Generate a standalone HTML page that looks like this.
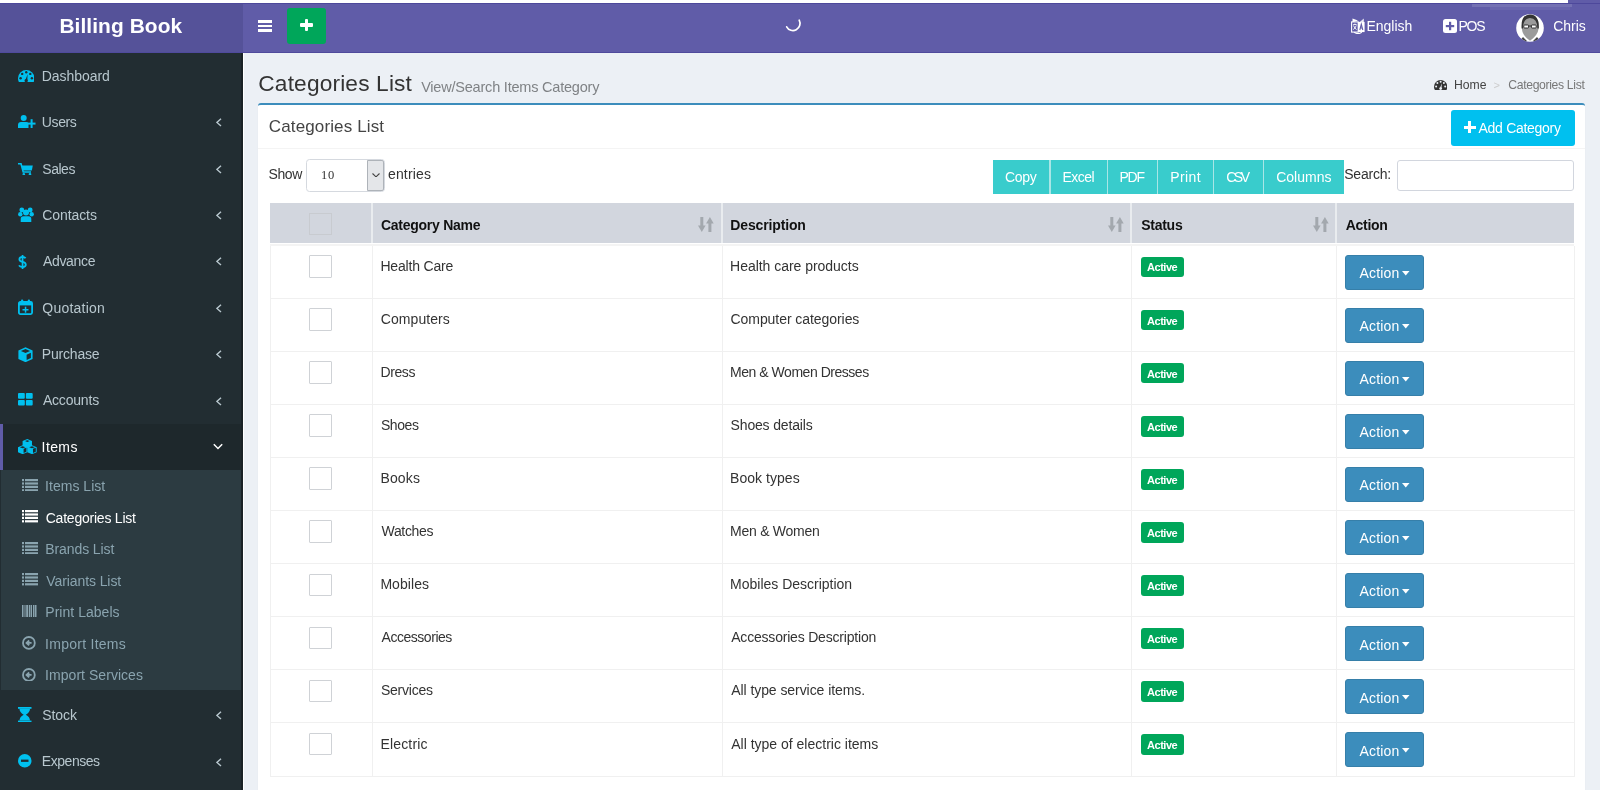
<!DOCTYPE html>
<html><head><meta charset="utf-8"><title>Categories List</title>
<style>
html,body{margin:0;padding:0;width:1600px;height:790px;overflow:hidden;background:#ecf0f5;}
body{position:relative;font-family:"Liberation Sans",sans-serif;}
#root{position:absolute;left:0;top:0;width:1600px;height:790px;will-change:transform;overflow:hidden;}
#root>div,#root>span,#root>svg{position:absolute;display:block;}
span{white-space:nowrap;}
</style></head><body><div id="root">
<div style="left:0px;top:0px;width:1600px;height:790px;background:#ecf0f5;"></div>
<div style="left:0px;top:0px;width:1568px;height:3px;background:#ffffff;"></div>
<div style="left:1568px;top:0px;width:32px;height:3px;background:#605ca8;"></div>
<div style="left:0px;top:3px;width:243px;height:50px;background:#555299;"></div>
<div style="left:243px;top:3px;width:1357px;height:50px;background:#605ca8;"></div>
<div style="left:0px;top:3px;width:1600px;height:1px;background:#4d489b;"></div>
<div style="left:0px;top:52px;width:1600px;height:1px;background:#4f4a9c;"></div>
<div style="left:1472px;top:4px;width:100px;height:3px;background:rgba(255,255,255,0.13);"></div>
<div style="left:1490px;top:7px;width:80px;height:3px;background:rgba(255,255,255,0.06);"></div>
<span style="left:59.40px;top:16.41px;font-size:20.9px;line-height:20.9px;color:#fff;font-weight:700;letter-spacing:0.082px;">Billing Book</span>
<div style="left:258px;top:20px;width:13.5px;height:2.5px;background:#fff;"></div>
<div style="left:258px;top:24.5px;width:13.5px;height:2.5px;background:#fff;"></div>
<div style="left:258px;top:29px;width:13.5px;height:2.5px;background:#fff;"></div>
<div style="left:286.5px;top:8.2px;width:39px;height:35.8px;background:#00a65a;border-radius:3px;"></div>
<div style="left:304.6px;top:18.8px;width:3.6px;height:12.5px;background:#fff;border-radius:1px;"></div>
<div style="left:300px;top:23.3px;width:12.6px;height:3.6px;background:#fff;border-radius:1px;"></div>
<svg style="left:784px;top:15px;" width="18" height="18" viewBox="0 0 18 18"><path d="M15.2 5.2 A6.6 6.6 0 1 1 2.7 11.8" fill="none" stroke="#fff" stroke-width="1.7" stroke-linecap="round"/></svg>
<svg style="left:1351px;top:17.6px;" width="14" height="16.2" viewBox="0 0 14 16.2"><path d="M1.5 0.6 L7 2.6 L1.5 4.2 Z" fill="#fff"/><path d="M12.8 0.5 L12.8 4.2 L8.5 4.2 Z" fill="#fff" opacity="0.85"/><rect x="0.6" y="3.9" width="6.6" height="10.2" fill="none" stroke="#fff" stroke-width="1.1"/><rect x="7" y="3.9" width="6.6" height="10.2" fill="#fff"/><path d="M2.2 6.5 L5.6 6.5 M3.9 5.6 L3.9 6.5 M2.5 7.5 Q3.9 11 5.6 11.5 M5.3 7.5 Q3.9 11 2.2 11.5" fill="none" stroke="#fff" stroke-width="0.9"/><path d="M8.8 12 L10.3 6.2 L11.8 12 M9.4 10 L11.2 10" fill="none" stroke="#605ca8" stroke-width="1.1"/><path d="M3.2 14.2 Q7 17 10.8 14.2" fill="none" stroke="#fff" stroke-width="1.1"/></svg>
<span style="left:1366.40px;top:19.35px;font-size:14px;line-height:14px;color:#fff;letter-spacing:0.017px;">English</span>
<svg style="left:1443px;top:18.5px;" width="14" height="14" viewBox="0 0 14 14"><rect x="0" y="0" width="14" height="14" rx="2.5" fill="#fff"/><rect x="6" y="2.8" width="2.2" height="8.4" fill="#605ca8"/><rect x="2.8" y="6" width="8.4" height="2.2" fill="#605ca8"/></svg>
<span style="left:1458.40px;top:19.35px;font-size:14px;line-height:14px;color:#fff;letter-spacing:-1.150px;">POS</span>
<svg style="left:1516px;top:13.5px;" width="28" height="28" viewBox="0 0 28 28"><defs><clipPath id="cav"><circle cx="14" cy="14" r="13.8"/></clipPath></defs><circle cx="14" cy="14" r="13.8" fill="#fff"/><g clip-path="url(#cav)"><path d="M3 28 L7 23 L11 27 L10 28 Z M25 28 L21 23 L17 27 L18 28 Z" fill="#444"/></g><path d="M6 10 Q6 2 14 2 Q22 2 22.5 10 L22.5 15 Q22 21 14 26.8 Q6 21 6 15 Z" fill="#9b9b9b"/><path d="M5.6 14.5 Q4.6 0.6 14 0.4 Q23.4 0.6 22.8 14.5 L21.4 14.5 Q21.5 4.5 14 4 Q7 4.5 7 14.5 Z" fill="#333"/><rect x="7.8" y="11" width="4.8" height="3" rx="0.8" fill="#fff" stroke="#222" stroke-width="0.9"/><rect x="15.4" y="11" width="4.8" height="3" rx="0.8" fill="#fff" stroke="#222" stroke-width="0.9"/><path d="M12.6 12 L15.4 12" stroke="#222" stroke-width="0.9"/></svg>
<span style="left:1553.30px;top:19.15px;font-size:14px;line-height:14px;color:#fff;letter-spacing:-0.050px;">Chris</span>
<div style="left:0px;top:53px;width:243px;height:737px;background:#222d32;"></div>
<div style="left:241px;top:53px;width:2px;height:737px;background:#1a2226;"></div>
<div style="left:243px;top:53px;width:1px;height:737px;background:#ffffff;"></div>
<div style="left:0px;top:423.7px;width:241px;height:46.2px;background:#1e282c;"></div>
<div style="left:0px;top:423.7px;width:3px;height:46.2px;background:#605ca8;"></div>
<div style="left:1px;top:469.9px;width:240px;height:220.5px;background:#2c3b41;"></div>
<span style="left:41.80px;top:68.95px;font-size:14px;line-height:14px;color:#b8c7ce;letter-spacing:-0.062px;">Dashboard</span>
<span style="left:41.80px;top:115.31px;font-size:14px;line-height:14px;color:#b8c7ce;letter-spacing:-0.375px;">Users</span>
<svg style="left:216px;top:118.36px;" width="6" height="9" viewBox="0 0 6 9"><path d="M5 0.7 L0.9 4.4 L5 8.1" fill="none" stroke="#b8c7ce" stroke-width="1.4"/></svg>
<span style="left:42.30px;top:161.67px;font-size:14px;line-height:14px;color:#b8c7ce;letter-spacing:-0.475px;">Sales</span>
<svg style="left:216px;top:164.71999999999997px;" width="6" height="9" viewBox="0 0 6 9"><path d="M5 0.7 L0.9 4.4 L5 8.1" fill="none" stroke="#b8c7ce" stroke-width="1.4"/></svg>
<span style="left:42.20px;top:208.03px;font-size:14px;line-height:14px;color:#b8c7ce;letter-spacing:-0.071px;">Contacts</span>
<svg style="left:216px;top:211.07999999999998px;" width="6" height="9" viewBox="0 0 6 9"><path d="M5 0.7 L0.9 4.4 L5 8.1" fill="none" stroke="#b8c7ce" stroke-width="1.4"/></svg>
<span style="left:42.90px;top:254.39px;font-size:14px;line-height:14px;color:#b8c7ce;letter-spacing:-0.317px;">Advance</span>
<svg style="left:216px;top:257.44px;" width="6" height="9" viewBox="0 0 6 9"><path d="M5 0.7 L0.9 4.4 L5 8.1" fill="none" stroke="#b8c7ce" stroke-width="1.4"/></svg>
<span style="left:42.30px;top:300.75px;font-size:14px;line-height:14px;color:#b8c7ce;letter-spacing:0.225px;">Quotation</span>
<svg style="left:216px;top:303.8px;" width="6" height="9" viewBox="0 0 6 9"><path d="M5 0.7 L0.9 4.4 L5 8.1" fill="none" stroke="#b8c7ce" stroke-width="1.4"/></svg>
<span style="left:41.80px;top:347.11px;font-size:14px;line-height:14px;color:#b8c7ce;letter-spacing:-0.186px;">Purchase</span>
<svg style="left:216px;top:350.15999999999997px;" width="6" height="9" viewBox="0 0 6 9"><path d="M5 0.7 L0.9 4.4 L5 8.1" fill="none" stroke="#b8c7ce" stroke-width="1.4"/></svg>
<span style="left:42.90px;top:393.47px;font-size:14px;line-height:14px;color:#b8c7ce;letter-spacing:-0.186px;">Accounts</span>
<svg style="left:216px;top:396.52px;" width="6" height="9" viewBox="0 0 6 9"><path d="M5 0.7 L0.9 4.4 L5 8.1" fill="none" stroke="#b8c7ce" stroke-width="1.4"/></svg>
<span style="left:41.60px;top:439.83px;font-size:14px;line-height:14px;color:#fff;letter-spacing:0.400px;">Items</span>
<svg style="left:213px;top:442.5px;" width="10" height="7" viewBox="0 0 10 7"><path d="M0.8 1.2 L5 5.5 L9.2 1.2" fill="none" stroke="#fff" stroke-width="1.5"/></svg>
<span style="left:42.30px;top:707.85px;font-size:14px;line-height:14px;color:#b8c7ce;letter-spacing:-0.100px;">Stock</span>
<span style="left:41.80px;top:754.45px;font-size:14px;line-height:14px;color:#b8c7ce;letter-spacing:-0.457px;">Expenses</span>
<svg style="left:216px;top:710.9000000000001px;" width="6" height="9" viewBox="0 0 6 9"><path d="M5 0.7 L0.9 4.4 L5 8.1" fill="none" stroke="#b8c7ce" stroke-width="1.4"/></svg>
<svg style="left:216px;top:757.5px;" width="6" height="9" viewBox="0 0 6 9"><path d="M5 0.7 L0.9 4.4 L5 8.1" fill="none" stroke="#b8c7ce" stroke-width="1.4"/></svg>
<span style="left:45.10px;top:479.05px;font-size:14px;line-height:14px;color:#8aa4af;letter-spacing:0.022px;">Items List</span>
<svg style="left:22px;top:478.59999999999997px;" width="16" height="12.5" viewBox="0 0 16 12.5"><rect x="0" y="0" width="2" height="2.2" fill="#8aa4af"/><rect x="3" y="0" width="13" height="2.2" fill="#8aa4af"/><rect x="0" y="3.4" width="2" height="2.2" fill="#8aa4af"/><rect x="3" y="3.4" width="13" height="2.2" fill="#8aa4af"/><rect x="0" y="6.8" width="2" height="2.2" fill="#8aa4af"/><rect x="3" y="6.8" width="13" height="2.2" fill="#8aa4af"/><rect x="0" y="10.2" width="2" height="2.2" fill="#8aa4af"/><rect x="3" y="10.2" width="13" height="2.2" fill="#8aa4af"/></svg>
<span style="left:45.70px;top:510.55px;font-size:14px;line-height:14px;color:#fff;letter-spacing:-0.221px;">Categories List</span>
<svg style="left:22px;top:510.09999999999997px;" width="16" height="12.5" viewBox="0 0 16 12.5"><rect x="0" y="0" width="2" height="2.2" fill="#fff"/><rect x="3" y="0" width="13" height="2.2" fill="#fff"/><rect x="0" y="3.4" width="2" height="2.2" fill="#fff"/><rect x="3" y="3.4" width="13" height="2.2" fill="#fff"/><rect x="0" y="6.8" width="2" height="2.2" fill="#fff"/><rect x="3" y="6.8" width="13" height="2.2" fill="#fff"/><rect x="0" y="10.2" width="2" height="2.2" fill="#fff"/><rect x="3" y="10.2" width="13" height="2.2" fill="#fff"/></svg>
<span style="left:45.30px;top:542.05px;font-size:14px;line-height:14px;color:#8aa4af;letter-spacing:-0.100px;">Brands List</span>
<svg style="left:22px;top:541.6px;" width="16" height="12.5" viewBox="0 0 16 12.5"><rect x="0" y="0" width="2" height="2.2" fill="#8aa4af"/><rect x="3" y="0" width="13" height="2.2" fill="#8aa4af"/><rect x="0" y="3.4" width="2" height="2.2" fill="#8aa4af"/><rect x="3" y="3.4" width="13" height="2.2" fill="#8aa4af"/><rect x="0" y="6.8" width="2" height="2.2" fill="#8aa4af"/><rect x="3" y="6.8" width="13" height="2.2" fill="#8aa4af"/><rect x="0" y="10.2" width="2" height="2.2" fill="#8aa4af"/><rect x="3" y="10.2" width="13" height="2.2" fill="#8aa4af"/></svg>
<span style="left:46.30px;top:573.55px;font-size:14px;line-height:14px;color:#8aa4af;letter-spacing:-0.092px;">Variants List</span>
<svg style="left:22px;top:573.1px;" width="16" height="12.5" viewBox="0 0 16 12.5"><rect x="0" y="0" width="2" height="2.2" fill="#8aa4af"/><rect x="3" y="0" width="13" height="2.2" fill="#8aa4af"/><rect x="0" y="3.4" width="2" height="2.2" fill="#8aa4af"/><rect x="3" y="3.4" width="13" height="2.2" fill="#8aa4af"/><rect x="0" y="6.8" width="2" height="2.2" fill="#8aa4af"/><rect x="3" y="6.8" width="13" height="2.2" fill="#8aa4af"/><rect x="0" y="10.2" width="2" height="2.2" fill="#8aa4af"/><rect x="3" y="10.2" width="13" height="2.2" fill="#8aa4af"/></svg>
<span style="left:45.30px;top:605.05px;font-size:14px;line-height:14px;color:#8aa4af;letter-spacing:0.027px;">Print Labels</span>
<svg style="left:22px;top:604.6px;" width="15" height="12.5" viewBox="0 0 15 12.5"><rect x="0" y="0" width="1.5" height="12.5" fill="#8aa4af"/><rect x="2.5" y="0" width="1" height="12.5" fill="#8aa4af"/><rect x="4.2" y="0" width="2" height="12.5" fill="#8aa4af"/><rect x="7" y="0" width="1" height="12.5" fill="#8aa4af"/><rect x="8.5" y="0" width="1.5" height="12.5" fill="#8aa4af"/><rect x="11" y="0" width="1" height="12.5" fill="#8aa4af"/><rect x="12.5" y="0" width="2" height="12.5" fill="#8aa4af"/></svg>
<span style="left:45.10px;top:636.55px;font-size:14px;line-height:14px;color:#8aa4af;letter-spacing:0.264px;">Import Items</span>
<svg style="left:21.9px;top:636.1999999999999px;" width="13.8" height="13.8" viewBox="0 0 13.8 13.8"><circle cx="6.9" cy="6.9" r="5.9" fill="none" stroke="#8aa4af" stroke-width="1.8"/><path d="M9.6 6.9 H5 M7.2 4.5 L4.6 6.9 L7.2 9.3" fill="none" stroke="#8aa4af" stroke-width="1.9"/></svg>
<span style="left:45.10px;top:668.05px;font-size:14px;line-height:14px;color:#8aa4af;letter-spacing:0.043px;">Import Services</span>
<svg style="left:21.9px;top:667.6999999999999px;" width="13.8" height="13.8" viewBox="0 0 13.8 13.8"><circle cx="6.9" cy="6.9" r="5.9" fill="none" stroke="#8aa4af" stroke-width="1.8"/><path d="M9.6 6.9 H5 M7.2 4.5 L4.6 6.9 L7.2 9.3" fill="none" stroke="#8aa4af" stroke-width="1.9"/></svg>
<svg style="left:17.9px;top:70px;" width="16.5" height="12.3" viewBox="0 0 16.5 12.3"><defs><clipPath id="cdb"><rect x="0" y="0" width="16.5" height="12.3"/></clipPath></defs><g clip-path="url(#cdb)"><circle cx="8.25" cy="8.25" r="8.25" fill="#00c0ef"/></g><circle cx="2.6" cy="8.2" r="1.2" fill="#222d32"/><circle cx="4.2" cy="3.9" r="1.2" fill="#222d32"/><circle cx="8.25" cy="2.3" r="1.2" fill="#222d32"/><circle cx="12.3" cy="3.9" r="1.2" fill="#222d32"/><circle cx="13.9" cy="8.2" r="1.2" fill="#222d32"/><path d="M9.6 4.2 L7.3 10.2 L9.3 10.6 Z" fill="#222d32"/><circle cx="8.2" cy="10.6" r="1.7" fill="#222d32"/></svg>
<svg style="left:18.2px;top:115.4px;" width="17.5" height="13" viewBox="0 0 17.5 13"><circle cx="5.7" cy="3" r="3" fill="#00c0ef"/><path d="M0 13 L0 10 Q0 7 3 7 L8.5 7 Q10.5 7 10.5 9 L10.5 13 Z" fill="#00c0ef"/><rect x="12.6" y="4.2" width="2" height="8.8" fill="#00c0ef"/><rect x="9.2" y="7.6" width="8.3" height="2" fill="#00c0ef"/></svg>
<svg style="left:18.2px;top:162.5px;" width="15" height="12.5" viewBox="0 0 15 12.5"><path d="M0 0.8 L3 0.8 L5.2 9 L13 9" fill="none" stroke="#00c0ef" stroke-width="1.6"/><path d="M3.6 2.5 L14.8 2.5 L13.8 7.5 L4.8 7.5 Z" fill="#00c0ef"/><circle cx="5.8" cy="11.3" r="1.3" fill="#00c0ef"/><circle cx="12" cy="11.3" r="1.3" fill="#00c0ef"/></svg>
<svg style="left:18px;top:206.5px;" width="16" height="15.7" viewBox="0 0 16 15.7"><circle cx="3.8" cy="3" r="2.4" fill="#00c0ef"/><circle cx="12.2" cy="3" r="2.4" fill="#00c0ef"/><circle cx="2.3" cy="7.2" r="2.2" fill="#00c0ef"/><circle cx="13.7" cy="7.2" r="2.2" fill="#00c0ef"/><circle cx="8" cy="5.5" r="3" fill="#00c0ef"/><path d="M2.7 15.7 L2.7 12 Q2.7 9.2 5.5 9.2 L10.5 9.2 Q13.3 9.2 13.3 12 L13.3 15.7 Z" fill="#00c0ef"/></svg>
<svg style="left:18px;top:254.9px;" width="9" height="14" viewBox="0 0 9 14"><path d="M7.6 3.3 Q6.8 2 4.5 2 Q1.4 2 1.4 4.3 Q1.4 6.2 4.5 6.9 Q7.8 7.6 7.8 9.8 Q7.8 12 4.5 12 Q1.8 12 1 10.4" fill="none" stroke="#00c0ef" stroke-width="1.8"/><rect x="3.7" y="0" width="1.7" height="14" fill="#00c0ef"/></svg>
<svg style="left:18px;top:299px;" width="15" height="16" viewBox="0 0 15 16"><rect x="0.9" y="2.9" width="13.2" height="12.2" rx="1.5" fill="none" stroke="#00c0ef" stroke-width="1.8"/><rect x="0.9" y="2.9" width="13.2" height="3.5" fill="#00c0ef"/><rect x="3" y="0.5" width="2.2" height="3.5" rx="1" fill="#00c0ef"/><rect x="9.8" y="0.5" width="2.2" height="3.5" rx="1" fill="#00c0ef"/><rect x="6.8" y="7.7" width="1.5" height="6" fill="#00c0ef"/><rect x="4.5" y="10" width="6" height="1.5" fill="#00c0ef"/></svg>
<svg style="left:18px;top:346.8px;" width="15" height="15.5" viewBox="0 0 15 15.5"><path d="M7.5 0.3 L14.6 3.5 L14.6 11.9 L7.5 15.2 L0.4 11.9 L0.4 3.5 Z" fill="#00c0ef"/><path d="M7.5 2.1 L12.1 4.1 L7.5 6.1 L2.9 4.1 Z" fill="#222d32"/><path d="M8.6 7.7 L12.9 5.7 L12.9 11 L8.6 13.1 Z" fill="#222d32"/></svg>
<svg style="left:18.1px;top:393.2px;" width="14.7" height="12.6" viewBox="0 0 14.7 12.6"><rect x="0" y="0" width="6.8" height="5.7" rx="1" fill="#00c0ef"/><rect x="7.9" y="0" width="6.8" height="5.7" rx="1" fill="#00c0ef"/><rect x="0" y="6.9" width="6.8" height="5.7" rx="1" fill="#00c0ef"/><rect x="7.9" y="6.9" width="6.8" height="5.7" rx="1" fill="#00c0ef"/></svg>
<svg style="left:18.1px;top:438.7px;" width="18.7" height="15.2" viewBox="0 0 18.7 15.2"><path d="M9.3 0 L14 2 L14 7 L9.3 9 L4.6 7 L4.6 2 Z" fill="#00c0ef"/><path d="M4.6 6.2 L9.3 8.2 L9.3 13.2 L4.6 15.2 L0 13.2 L0 8.2 Z" fill="#00c0ef"/><path d="M14 6.2 L18.7 8.2 L18.7 13.2 L14 15.2 L9.3 13.2 L9.3 8.2 Z" fill="#00c0ef"/><path d="M7 2.1 L9.3 1.2 L11.7 2.1 L9.3 3.1 Z M1.8 8.3 L4.6 7.3 L7.5 8.3 L4.6 9.3 Z M11.2 8.3 L14 7.3 L16.9 8.3 L14 9.3 Z" fill="#1e282c"/><path d="M5.6 9.7 L8.4 8.8 L8.4 12.8 L5.6 14 Z M15 9.7 L17.8 8.8 L17.8 12.8 L15 14 Z" fill="#1e282c"/></svg>
<svg style="left:18.1px;top:706.6px;" width="13.5" height="15.4" viewBox="0 0 13.5 15.4"><rect x="0" y="0" width="13.5" height="1.8" fill="#00c0ef"/><rect x="0" y="13.6" width="13.5" height="1.8" fill="#00c0ef"/><path d="M1.5 1.8 L12 1.8 Q12 5.5 7.8 7.7 Q12 10 12 13.6 L1.5 13.6 Q1.5 10 5.7 7.7 Q1.5 5.5 1.5 1.8 Z" fill="#00c0ef"/></svg>
<svg style="left:18.1px;top:754.2px;" width="13.5" height="13.5" viewBox="0 0 13.5 13.5"><circle cx="6.75" cy="6.75" r="6.75" fill="#00c0ef"/><rect x="3" y="5.6" width="7.5" height="2.3" fill="#222d32"/></svg>
<span style="left:258.30px;top:72.03px;font-size:22.7px;line-height:22.7px;color:#333;letter-spacing:0.164px;">Categories List</span>
<span style="left:421.15px;top:79.63px;font-size:14.5px;line-height:14.5px;color:#7f8285;letter-spacing:-0.208px;">View/Search Items Category</span>
<svg style="left:1433.7px;top:80.3px;" width="13.3" height="10" viewBox="0 0 13.3 10"><defs><clipPath id="cbc"><rect x="0" y="0" width="13.3" height="10"/></clipPath></defs><g clip-path="url(#cbc)"><circle cx="6.65" cy="6.65" r="6.65" fill="#333"/></g><circle cx="2.1" cy="6.6" r="1" fill="#ecf0f5"/><circle cx="3.4" cy="3.1" r="1" fill="#ecf0f5"/><circle cx="6.65" cy="1.8" r="1" fill="#ecf0f5"/><circle cx="9.9" cy="3.1" r="1" fill="#ecf0f5"/><circle cx="11.2" cy="6.6" r="1" fill="#ecf0f5"/><path d="M7.8 3.3 L5.9 8.3 L7.5 8.6 Z" fill="#ecf0f5"/><circle cx="6.65" cy="8.6" r="1.4" fill="#ecf0f5"/></svg>
<span style="left:1453.90px;top:79.37px;font-size:12.2px;line-height:12.2px;color:#444;letter-spacing:0.033px;">Home</span>
<span style="left:1493.50px;top:79.89px;font-size:11px;line-height:11px;color:#ccc;">&gt;</span>
<span style="left:1508.30px;top:79.37px;font-size:12.2px;line-height:12.2px;color:#777;letter-spacing:-0.343px;">Categories List</span>
<div style="left:258px;top:103px;width:1327px;height:700px;background:#fff;border-top:2.5px solid #3c8dbc;border-radius:3px;box-shadow:0 1px 1px rgba(0,0,0,0.1);box-sizing:border-box;"></div>
<span style="left:268.80px;top:117.61px;font-size:17px;line-height:17px;color:#444;letter-spacing:0.129px;">Categories List</span>
<div style="left:258px;top:148px;width:1327px;height:1px;background:#f4f4f4;"></div>
<div style="left:1451px;top:110.3px;width:123.8px;height:35.5px;background:#00c0ef;border-radius:3px;"></div>
<div style="left:1467.6px;top:121.3px;width:3.6px;height:11.7px;background:#fff;"></div>
<div style="left:1463.5px;top:125.5px;width:12.3px;height:3.6px;background:#fff;"></div>
<span style="left:1478.50px;top:121.15px;font-size:14px;line-height:14px;color:#fff;letter-spacing:-0.282px;">Add Category</span>
<span style="left:268.40px;top:166.65px;font-size:14px;line-height:14px;color:#333;letter-spacing:-0.333px;">Show</span>
<div style="left:306.2px;top:159.2px;width:78.4px;height:32.4px;background:#fff;border:1px solid #d5d9df;border-radius:3.5px;box-sizing:border-box;"></div>
<div style="left:366.8px;top:160.2px;width:17.2px;height:30.5px;background:#e4e6e9;border:1px solid #aeb3b9;border-radius:0 2px 2px 0;box-sizing:border-box;"></div>
<svg style="left:371.6px;top:172.8px;" width="8" height="4.4" viewBox="0 0 8 4.4"><path d="M0.5 0.5 L4 3.8 L7.5 0.5" fill="none" stroke="#444" stroke-width="1.1"/></svg>
<span style="left:320.90px;top:169.12px;font-size:12.5px;line-height:12.5px;color:#333;font-family:'Liberation Serif',serif;letter-spacing:0.800px;">10</span>
<span style="left:388.00px;top:166.65px;font-size:14px;line-height:14px;color:#333;letter-spacing:0.150px;">entries</span>
<div style="left:992.5px;top:160px;width:351.5px;height:34px;background:#39cccc;"></div>
<div style="left:1049.4px;top:160px;width:1.2px;height:34px;background:#a9e6e6;"></div>
<div style="left:1106.9px;top:160px;width:1.2px;height:34px;background:#a9e6e6;"></div>
<div style="left:1157.15px;top:160px;width:1.2px;height:34px;background:#a9e6e6;"></div>
<div style="left:1212.9px;top:160px;width:1.2px;height:34px;background:#a9e6e6;"></div>
<div style="left:1262.9px;top:160px;width:1.2px;height:34px;background:#a9e6e6;"></div>
<span style="left:1004.90px;top:170.05px;font-size:14px;line-height:14px;color:#fff;letter-spacing:-0.233px;">Copy</span>
<span style="left:1062.40px;top:170.05px;font-size:14px;line-height:14px;color:#fff;letter-spacing:-0.488px;">Excel</span>
<span style="left:1119.50px;top:170.05px;font-size:14px;line-height:14px;color:#fff;letter-spacing:-1.250px;">PDF</span>
<span style="left:1170.15px;top:170.05px;font-size:14px;line-height:14px;color:#fff;letter-spacing:0.438px;">Print</span>
<span style="left:1226.20px;top:170.05px;font-size:14px;line-height:14px;color:#fff;letter-spacing:-2.450px;">CSV</span>
<span style="left:1276.20px;top:170.05px;font-size:14px;line-height:14px;color:#fff;letter-spacing:0.017px;">Columns</span>
<span style="left:1344.25px;top:167.15px;font-size:14px;line-height:14px;color:#333;letter-spacing:-0.233px;">Search:</span>
<div style="left:1397.2px;top:159.6px;width:177.1px;height:31.7px;background:#fff;border:1px solid #d2d6de;border-radius:3px;box-sizing:border-box;"></div>
<div style="left:270px;top:203.2px;width:1304.3px;height:40.3px;background:#d2d6de;"></div>
<div style="left:371px;top:203.2px;width:2px;height:40.3px;background:#e9ecef;"></div>
<div style="left:721px;top:203.2px;width:2px;height:40.3px;background:#e9ecef;"></div>
<div style="left:1130.3px;top:203.2px;width:2px;height:40.3px;background:#e9ecef;"></div>
<div style="left:1335.4px;top:203.2px;width:2px;height:40.3px;background:#e9ecef;"></div>
<div style="left:270px;top:243.5px;width:1304.3px;height:2px;background:#f4f4f4;"></div>
<div style="left:309.4px;top:212.5px;width:22.5px;height:22.3px;background:transparent;border:1px solid #c8cbd0;box-sizing:border-box;"></div>
<span style="left:381.00px;top:217.95px;font-size:14px;line-height:14px;color:#111;font-weight:700;letter-spacing:-0.267px;">Category Name</span>
<span style="left:730.30px;top:217.95px;font-size:14px;line-height:14px;color:#111;font-weight:700;letter-spacing:-0.140px;">Description</span>
<span style="left:1141.20px;top:217.95px;font-size:14px;line-height:14px;color:#111;font-weight:700;letter-spacing:-0.260px;">Status</span>
<span style="left:1345.70px;top:217.95px;font-size:14px;line-height:14px;color:#111;font-weight:700;letter-spacing:-0.280px;">Action</span>
<svg style="left:697.9px;top:216.8px;" width="16" height="15" viewBox="0 0 16 15"><rect x="2.3" y="0" width="3" height="9.5" fill="#a3a8ae"/><path d="M0 8.6 L7.6 8.6 L3.8 14.9 Z" fill="#a3a8ae"/><rect x="10.4" y="5.5" width="3" height="9.5" fill="#a3a8ae"/><path d="M8.1 6.4 L15.7 6.4 L11.9 0.1 Z" fill="#a3a8ae"/></svg>
<svg style="left:1107.9px;top:216.8px;" width="16" height="15" viewBox="0 0 16 15"><rect x="2.3" y="0" width="3" height="9.5" fill="#a3a8ae"/><path d="M0 8.6 L7.6 8.6 L3.8 14.9 Z" fill="#a3a8ae"/><rect x="10.4" y="5.5" width="3" height="9.5" fill="#a3a8ae"/><path d="M8.1 6.4 L15.7 6.4 L11.9 0.1 Z" fill="#a3a8ae"/></svg>
<svg style="left:1313.4px;top:216.8px;" width="16" height="15" viewBox="0 0 16 15"><rect x="2.3" y="0" width="3" height="9.5" fill="#a3a8ae"/><path d="M0 8.6 L7.6 8.6 L3.8 14.9 Z" fill="#a3a8ae"/><rect x="10.4" y="5.5" width="3" height="9.5" fill="#a3a8ae"/><path d="M8.1 6.4 L15.7 6.4 L11.9 0.1 Z" fill="#a3a8ae"/></svg>
<div style="left:269.5px;top:245.5px;width:1px;height:531px;background:#f0f0f0;"></div>
<div style="left:1573.8px;top:245.5px;width:1px;height:531px;background:#f0f0f0;"></div>
<div style="left:371.5px;top:245.5px;width:1px;height:531px;background:#f0f0f0;"></div>
<div style="left:721.5px;top:245.5px;width:1px;height:531px;background:#f0f0f0;"></div>
<div style="left:1130.8px;top:245.5px;width:1px;height:531px;background:#f0f0f0;"></div>
<div style="left:1335.9px;top:245.5px;width:1px;height:531px;background:#f0f0f0;"></div>
<div style="left:309.4px;top:255.2px;width:22.5px;height:22.5px;background:#fff;border:1px solid #cfd2d6;border-radius:1px;box-sizing:border-box;"></div>
<span style="left:380.40px;top:259.05px;font-size:14px;line-height:14px;color:#333;letter-spacing:-0.175px;">Health Care</span>
<span style="left:730.10px;top:259.05px;font-size:14px;line-height:14px;color:#333;letter-spacing:-0.032px;">Health care products</span>
<div style="left:1140.7px;top:257.0px;width:43.6px;height:20.4px;background:#00a65a;border-radius:3px;"></div>
<span style="left:1147.00px;top:262.49px;font-size:11px;line-height:11px;color:#fff;font-weight:700;letter-spacing:-0.460px;">Active</span>
<div style="left:1345.4px;top:254.6px;width:78.3px;height:35.3px;background:#3c8dbc;border:1px solid #367fa9;border-radius:3px;box-sizing:border-box;"></div>
<span style="left:1359.60px;top:266.15px;font-size:14px;line-height:14px;color:#fff;letter-spacing:0.160px;">Action</span>
<svg style="left:1402.2px;top:271.0px;" width="7.8" height="4.6" viewBox="0 0 7.8 4.6"><path d="M0 0 L7.5 0 L3.75 4.5 Z" fill="#fff"/></svg>
<div style="left:270px;top:298.05px;width:1304.3px;height:1px;background:#f0f0f0;"></div>
<div style="left:309.4px;top:308.25px;width:22.5px;height:22.5px;background:#fff;border:1px solid #cfd2d6;border-radius:1px;box-sizing:border-box;"></div>
<span style="left:380.80px;top:312.10px;font-size:14px;line-height:14px;color:#333;letter-spacing:0.062px;">Computers</span>
<span style="left:730.50px;top:312.10px;font-size:14px;line-height:14px;color:#333;letter-spacing:-0.061px;">Computer categories</span>
<div style="left:1140.7px;top:310.05px;width:43.6px;height:20.4px;background:#00a65a;border-radius:3px;"></div>
<span style="left:1147.00px;top:315.54px;font-size:11px;line-height:11px;color:#fff;font-weight:700;letter-spacing:-0.460px;">Active</span>
<div style="left:1345.4px;top:307.65000000000003px;width:78.3px;height:35.3px;background:#3c8dbc;border:1px solid #367fa9;border-radius:3px;box-sizing:border-box;"></div>
<span style="left:1359.60px;top:319.20px;font-size:14px;line-height:14px;color:#fff;letter-spacing:0.160px;">Action</span>
<svg style="left:1402.2px;top:324.05px;" width="7.8" height="4.6" viewBox="0 0 7.8 4.6"><path d="M0 0 L7.5 0 L3.75 4.5 Z" fill="#fff"/></svg>
<div style="left:270px;top:351.1px;width:1304.3px;height:1px;background:#f0f0f0;"></div>
<div style="left:309.4px;top:361.3px;width:22.5px;height:22.5px;background:#fff;border:1px solid #cfd2d6;border-radius:1px;box-sizing:border-box;"></div>
<span style="left:380.40px;top:365.15px;font-size:14px;line-height:14px;color:#333;letter-spacing:-0.375px;">Dress</span>
<span style="left:730.10px;top:365.15px;font-size:14px;line-height:14px;color:#333;letter-spacing:-0.472px;">Men &amp; Women Dresses</span>
<div style="left:1140.7px;top:363.1px;width:43.6px;height:20.4px;background:#00a65a;border-radius:3px;"></div>
<span style="left:1147.00px;top:368.59px;font-size:11px;line-height:11px;color:#fff;font-weight:700;letter-spacing:-0.460px;">Active</span>
<div style="left:1345.4px;top:360.70000000000005px;width:78.3px;height:35.3px;background:#3c8dbc;border:1px solid #367fa9;border-radius:3px;box-sizing:border-box;"></div>
<span style="left:1359.60px;top:372.25px;font-size:14px;line-height:14px;color:#fff;letter-spacing:0.160px;">Action</span>
<svg style="left:1402.2px;top:377.1px;" width="7.8" height="4.6" viewBox="0 0 7.8 4.6"><path d="M0 0 L7.5 0 L3.75 4.5 Z" fill="#fff"/></svg>
<div style="left:270px;top:404.15px;width:1304.3px;height:1px;background:#f0f0f0;"></div>
<div style="left:309.4px;top:414.34999999999997px;width:22.5px;height:22.5px;background:#fff;border:1px solid #cfd2d6;border-radius:1px;box-sizing:border-box;"></div>
<span style="left:380.90px;top:418.20px;font-size:14px;line-height:14px;color:#333;letter-spacing:-0.400px;">Shoes</span>
<span style="left:730.60px;top:418.20px;font-size:14px;line-height:14px;color:#333;letter-spacing:-0.167px;">Shoes details</span>
<div style="left:1140.7px;top:416.15px;width:43.6px;height:20.4px;background:#00a65a;border-radius:3px;"></div>
<span style="left:1147.00px;top:421.64px;font-size:11px;line-height:11px;color:#fff;font-weight:700;letter-spacing:-0.460px;">Active</span>
<div style="left:1345.4px;top:413.75px;width:78.3px;height:35.3px;background:#3c8dbc;border:1px solid #367fa9;border-radius:3px;box-sizing:border-box;"></div>
<span style="left:1359.60px;top:425.30px;font-size:14px;line-height:14px;color:#fff;letter-spacing:0.160px;">Action</span>
<svg style="left:1402.2px;top:430.15px;" width="7.8" height="4.6" viewBox="0 0 7.8 4.6"><path d="M0 0 L7.5 0 L3.75 4.5 Z" fill="#fff"/></svg>
<div style="left:270px;top:457.2px;width:1304.3px;height:1px;background:#f0f0f0;"></div>
<div style="left:309.4px;top:467.4px;width:22.5px;height:22.5px;background:#fff;border:1px solid #cfd2d6;border-radius:1px;box-sizing:border-box;"></div>
<span style="left:380.40px;top:471.25px;font-size:14px;line-height:14px;color:#333;letter-spacing:0.175px;">Books</span>
<span style="left:730.10px;top:471.25px;font-size:14px;line-height:14px;color:#333;letter-spacing:0.033px;">Book types</span>
<div style="left:1140.7px;top:469.2px;width:43.6px;height:20.4px;background:#00a65a;border-radius:3px;"></div>
<span style="left:1147.00px;top:474.69px;font-size:11px;line-height:11px;color:#fff;font-weight:700;letter-spacing:-0.460px;">Active</span>
<div style="left:1345.4px;top:466.8px;width:78.3px;height:35.3px;background:#3c8dbc;border:1px solid #367fa9;border-radius:3px;box-sizing:border-box;"></div>
<span style="left:1359.60px;top:478.35px;font-size:14px;line-height:14px;color:#fff;letter-spacing:0.160px;">Action</span>
<svg style="left:1402.2px;top:483.2px;" width="7.8" height="4.6" viewBox="0 0 7.8 4.6"><path d="M0 0 L7.5 0 L3.75 4.5 Z" fill="#fff"/></svg>
<div style="left:270px;top:510.25px;width:1304.3px;height:1px;background:#f0f0f0;"></div>
<div style="left:309.4px;top:520.45px;width:22.5px;height:22.5px;background:#fff;border:1px solid #cfd2d6;border-radius:1px;box-sizing:border-box;"></div>
<span style="left:381.50px;top:524.30px;font-size:14px;line-height:14px;color:#333;letter-spacing:-0.317px;">Watches</span>
<span style="left:730.10px;top:524.30px;font-size:14px;line-height:14px;color:#333;letter-spacing:-0.270px;">Men &amp; Women</span>
<div style="left:1140.7px;top:522.25px;width:43.6px;height:20.4px;background:#00a65a;border-radius:3px;"></div>
<span style="left:1147.00px;top:527.74px;font-size:11px;line-height:11px;color:#fff;font-weight:700;letter-spacing:-0.460px;">Active</span>
<div style="left:1345.4px;top:519.85px;width:78.3px;height:35.3px;background:#3c8dbc;border:1px solid #367fa9;border-radius:3px;box-sizing:border-box;"></div>
<span style="left:1359.60px;top:531.40px;font-size:14px;line-height:14px;color:#fff;letter-spacing:0.160px;">Action</span>
<svg style="left:1402.2px;top:536.25px;" width="7.8" height="4.6" viewBox="0 0 7.8 4.6"><path d="M0 0 L7.5 0 L3.75 4.5 Z" fill="#fff"/></svg>
<div style="left:270px;top:563.3px;width:1304.3px;height:1px;background:#f0f0f0;"></div>
<div style="left:309.4px;top:573.5px;width:22.5px;height:22.5px;background:#fff;border:1px solid #cfd2d6;border-radius:1px;box-sizing:border-box;"></div>
<span style="left:380.40px;top:577.35px;font-size:14px;line-height:14px;color:#333;letter-spacing:0.067px;">Mobiles</span>
<span style="left:730.10px;top:577.35px;font-size:14px;line-height:14px;color:#333;letter-spacing:-0.011px;">Mobiles Description</span>
<div style="left:1140.7px;top:575.3px;width:43.6px;height:20.4px;background:#00a65a;border-radius:3px;"></div>
<span style="left:1147.00px;top:580.79px;font-size:11px;line-height:11px;color:#fff;font-weight:700;letter-spacing:-0.460px;">Active</span>
<div style="left:1345.4px;top:572.9px;width:78.3px;height:35.3px;background:#3c8dbc;border:1px solid #367fa9;border-radius:3px;box-sizing:border-box;"></div>
<span style="left:1359.60px;top:584.45px;font-size:14px;line-height:14px;color:#fff;letter-spacing:0.160px;">Action</span>
<svg style="left:1402.2px;top:589.3px;" width="7.8" height="4.6" viewBox="0 0 7.8 4.6"><path d="M0 0 L7.5 0 L3.75 4.5 Z" fill="#fff"/></svg>
<div style="left:270px;top:616.3499999999999px;width:1304.3px;height:1px;background:#f0f0f0;"></div>
<div style="left:309.4px;top:626.55px;width:22.5px;height:22.5px;background:#fff;border:1px solid #cfd2d6;border-radius:1px;box-sizing:border-box;"></div>
<span style="left:381.50px;top:630.40px;font-size:14px;line-height:14px;color:#333;letter-spacing:-0.460px;">Accessories</span>
<span style="left:731.20px;top:630.40px;font-size:14px;line-height:14px;color:#333;letter-spacing:-0.195px;">Accessories Description</span>
<div style="left:1140.7px;top:628.3499999999999px;width:43.6px;height:20.4px;background:#00a65a;border-radius:3px;"></div>
<span style="left:1147.00px;top:633.84px;font-size:11px;line-height:11px;color:#fff;font-weight:700;letter-spacing:-0.460px;">Active</span>
<div style="left:1345.4px;top:625.9499999999999px;width:78.3px;height:35.3px;background:#3c8dbc;border:1px solid #367fa9;border-radius:3px;box-sizing:border-box;"></div>
<span style="left:1359.60px;top:637.50px;font-size:14px;line-height:14px;color:#fff;letter-spacing:0.160px;">Action</span>
<svg style="left:1402.2px;top:642.3499999999999px;" width="7.8" height="4.6" viewBox="0 0 7.8 4.6"><path d="M0 0 L7.5 0 L3.75 4.5 Z" fill="#fff"/></svg>
<div style="left:270px;top:669.4px;width:1304.3px;height:1px;background:#f0f0f0;"></div>
<div style="left:309.4px;top:679.6px;width:22.5px;height:22.5px;background:#fff;border:1px solid #cfd2d6;border-radius:1px;box-sizing:border-box;"></div>
<span style="left:380.90px;top:683.45px;font-size:14px;line-height:14px;color:#333;letter-spacing:-0.229px;">Services</span>
<span style="left:731.20px;top:683.45px;font-size:14px;line-height:14px;color:#333;letter-spacing:-0.064px;">All type service items.</span>
<div style="left:1140.7px;top:681.4px;width:43.6px;height:20.4px;background:#00a65a;border-radius:3px;"></div>
<span style="left:1147.00px;top:686.89px;font-size:11px;line-height:11px;color:#fff;font-weight:700;letter-spacing:-0.460px;">Active</span>
<div style="left:1345.4px;top:679.0px;width:78.3px;height:35.3px;background:#3c8dbc;border:1px solid #367fa9;border-radius:3px;box-sizing:border-box;"></div>
<span style="left:1359.60px;top:690.55px;font-size:14px;line-height:14px;color:#fff;letter-spacing:0.160px;">Action</span>
<svg style="left:1402.2px;top:695.4px;" width="7.8" height="4.6" viewBox="0 0 7.8 4.6"><path d="M0 0 L7.5 0 L3.75 4.5 Z" fill="#fff"/></svg>
<div style="left:270px;top:722.45px;width:1304.3px;height:1px;background:#f0f0f0;"></div>
<div style="left:309.4px;top:732.6500000000001px;width:22.5px;height:22.5px;background:#fff;border:1px solid #cfd2d6;border-radius:1px;box-sizing:border-box;"></div>
<span style="left:380.40px;top:736.50px;font-size:14px;line-height:14px;color:#333;letter-spacing:0.186px;">Electric</span>
<span style="left:731.20px;top:736.50px;font-size:14px;line-height:14px;color:#333;">All type of electric items</span>
<div style="left:1140.7px;top:734.45px;width:43.6px;height:20.4px;background:#00a65a;border-radius:3px;"></div>
<span style="left:1147.00px;top:739.94px;font-size:11px;line-height:11px;color:#fff;font-weight:700;letter-spacing:-0.460px;">Active</span>
<div style="left:1345.4px;top:732.0500000000001px;width:78.3px;height:35.3px;background:#3c8dbc;border:1px solid #367fa9;border-radius:3px;box-sizing:border-box;"></div>
<span style="left:1359.60px;top:743.60px;font-size:14px;line-height:14px;color:#fff;letter-spacing:0.160px;">Action</span>
<svg style="left:1402.2px;top:748.45px;" width="7.8" height="4.6" viewBox="0 0 7.8 4.6"><path d="M0 0 L7.5 0 L3.75 4.5 Z" fill="#fff"/></svg>
<div style="left:270px;top:776px;width:1304.3px;height:1px;background:#f0f0f0;"></div>
</div></body></html>
